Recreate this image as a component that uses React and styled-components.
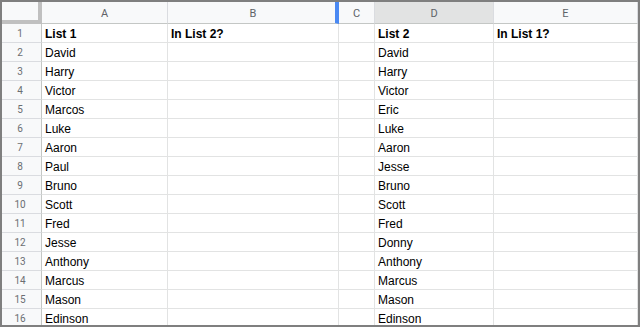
import React from "react";
import styled, { createGlobalStyle } from "styled-components";

const GlobalStyle = createGlobalStyle`
  html, body {
    margin: 0;
    padding: 0;
    background: #ffffff;
  }
  * {
    box-sizing: border-box;
  }
`;

const columns = [
  { key: "A", width: 126 },
  { key: "B", width: 171, resizing: true },
  { key: "C", width: 36 },
  { key: "D", width: 119, selected: true },
  { key: "E", width: 144 },
];

const list1 = [
  "David", "Harry", "Victor", "Marcos", "Luke", "Aaron", "Paul", "Bruno",
  "Scott", "Fred", "Jesse", "Anthony", "Marcus", "Mason", "Edinson",
];
const list2 = [
  "David", "Harry", "Victor", "Eric", "Luke", "Aaron", "Jesse", "Bruno",
  "Scott", "Fred", "Donny", "Anthony", "Marcus", "Mason", "Edinson",
];

const rows = [
  { bold: true, cells: ["List 1", "In List 2?", "", "List 2", "In List 1?"] },
  ...list1.map((name, i) => ({ cells: [name, "", "", list2[i], ""] })),
];

function App() {
  return (
    <>
      <GlobalStyle />
      <Frame>
        <Sheet>
          <Corner />
          {columns.map((col) => (
            <ColHeader
              key={col.key}
              $selected={col.selected}
              $resizing={col.resizing}
            >
              {col.key}
            </ColHeader>
          ))}
          {rows.map((row, r) => (
            <React.Fragment key={r}>
              <RowHeader>{r + 1}</RowHeader>
              {row.cells.map((text, c) => (
                <Cell key={c} $bold={row.bold}>
                  {text}
                </Cell>
              ))}
            </React.Fragment>
          ))}
        </Sheet>
      </Frame>
    </>
  );
}

export default App;

const Frame = styled.div`
  width: 640px;
  height: 327px;
  border: 2px solid #7f7f7f;
  overflow: hidden;
  background: #ffffff;
`;

const Sheet = styled.div`
  display: grid;
  grid-template-columns: 40px ${columns.map((c) => `${c.width}px`).join(" ")};
  grid-template-rows: 22px;
  grid-auto-rows: 19px;
`;

const Corner = styled.div`
  background: #f8f9fa;
  border-right: 4px solid #c0c0c0;
  border-bottom: 4px solid #c0c0c0;
`;

const ColHeader = styled.div`
  display: flex;
  align-items: center;
  justify-content: center;
  background: ${(p) => (p.$selected ? "#e2e3e3" : "#f8f9fa")};
  border-bottom: 1px solid #c4c7c5;
  border-right: ${(p) =>
    p.$resizing ? "4px solid #4a89f3" : "1px solid #dadce0"};
  padding-left: ${(p) => (p.$resizing ? "3px" : "0")};
  color: #5f6368;
  font-family: Roboto, "Liberation Sans", sans-serif;
  font-size: 11px;
  padding-top: 1px;
`;

const RowHeader = styled.div`
  display: flex;
  align-items: center;
  justify-content: center;
  padding-right: 3px;
  background: #f8f9fa;
  border-right: 1px solid #c4c7c5;
  border-bottom: 1px solid #dadce0;
  color: #6b6e72;
  font-family: Roboto, "Liberation Sans", sans-serif;
  font-size: 10px;
`;

const Cell = styled.div`
  display: flex;
  align-items: center;
  padding: 1px 3px 0;
  border-right: 1px solid #e2e3e3;
  border-bottom: 1px solid #e2e3e3;
  color: #000000;
  font-family: "Liberation Sans", Arial, sans-serif;
  font-size: 12px;
  font-weight: ${(p) => (p.$bold ? 700 : 400)};
  white-space: nowrap;
  overflow: hidden;
`;
